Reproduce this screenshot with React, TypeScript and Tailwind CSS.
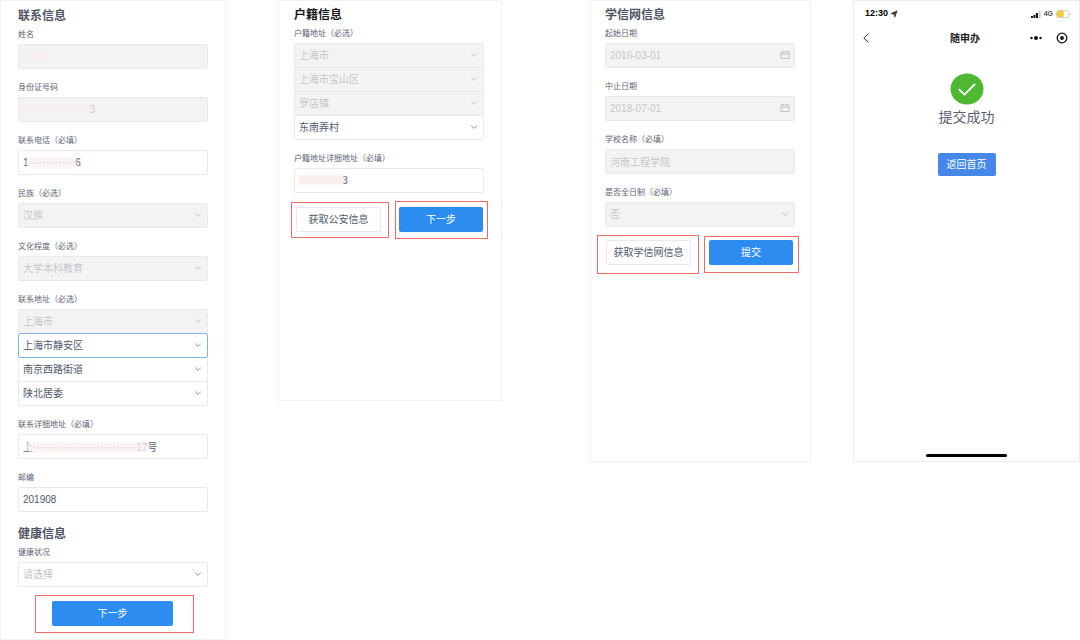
import type { ReactNode } from "react";

const controlBase =
  "block h-[25px] w-full appearance-none rounded-[2px] border bg-white py-0 pr-5 pl-1 text-[10px] leading-[23px] outline-none disabled:bg-[#f3f3f3] disabled:text-[#c6c8cc] disabled:opacity-100";

function Chevron({ muted }: { muted?: boolean }) {
  return (
    <svg
      viewBox="0 0 8 8"
      className={
        muted
          ? "pointer-events-none absolute top-2 right-1.5 size-2 text-[#c3c5c9]"
          : "pointer-events-none absolute top-2 right-1.5 size-2 text-[#8d92a0]"
      }
      fill="none"
      stroke="currentColor"
    >
      <path d="M1.2 2.6 4 5.4 6.8 2.6" />
    </svg>
  );
}

function CalendarIcon() {
  return (
    <svg
      viewBox="0 0 10 10"
      className="pointer-events-none absolute top-[7px] right-[5px] size-2.5 text-[#c0c2c7]"
      fill="none"
      stroke="currentColor"
    >
      <path d="M1 2h8v6.5H1zM1 4.2h8M3 .8v1.7M7 .8v1.7" />
    </svg>
  );
}

function Title({ children, dark }: { children: ReactNode; dark?: boolean }) {
  return (
    <h2
      className={
        dark
          ? "pt-px text-[12px] leading-[18px] font-bold text-[#17181c]"
          : "pt-px text-[12px] leading-[18px] font-bold text-[#4d5362]"
      }
    >
      {children}
    </h2>
  );
}

function Label({ id, children }: { id: string; children: ReactNode }) {
  return (
    <label htmlFor={id} className="block h-5 pt-px text-[8px] leading-5 whitespace-nowrap text-[#5c6475]">
      {children}
    </label>
  );
}

function Picker({
  id,
  value,
  disabled,
  active,
  placeholder,
  label,
}: {
  id: string;
  value: string;
  disabled?: boolean;
  active?: boolean;
  placeholder?: boolean;
  label?: string;
}) {
  return (
    <div className={active ? "relative z-10" : "relative"}>
      <select
        id={id}
        aria-label={label}
        disabled={disabled}
        defaultValue={value}
        className={`${controlBase} ${active ? "border-[#7fb4e6]" : "border-[#e8eaed]"} ${placeholder ? "text-[#bfc1c6]" : "text-[#515a6e]"}`}
      >
        <option>{value}</option>
      </select>
      <Chevron muted={disabled} />
    </div>
  );
}

function TextField({
  id,
  label,
  value,
  disabled,
  date,
  children,
}: {
  id: string;
  label: string;
  value: string;
  disabled?: boolean;
  date?: boolean;
  children?: ReactNode;
}) {
  return (
    <div>
      <Label id={id}>{label}</Label>
      <div className="relative">
        <input
          id={id}
          type="text"
          defaultValue={value}
          disabled={disabled}
          className={`${controlBase} border-[#e8eaed] text-[#515a6e]`}
        />
        {date && <CalendarIcon />}
        {children}
      </div>
    </div>
  );
}

function SelectField({
  id,
  label,
  value,
  disabled,
  placeholder,
}: {
  id: string;
  label: string;
  value: string;
  disabled?: boolean;
  placeholder?: boolean;
}) {
  return (
    <div>
      <Label id={id}>{label}</Label>
      <Picker id={id} value={value} disabled={disabled} placeholder={placeholder} />
    </div>
  );
}

const primary =
  "block h-[25px] w-full rounded-[2px] bg-[#2d8cf0] text-[10px] leading-[25px] whitespace-nowrap text-white";
const secondary =
  "block h-[25px] w-full rounded-[2px] border border-[#e8eaed] bg-white text-[10px] leading-[23px] whitespace-nowrap text-[#515a6e]";

function ContactPanel() {
  return (
    <section className="col-start-1 border border-[#f3f3f3] px-[17px] pt-[5px] pb-1.5">
      <Title>联系信息</Title>
      <div className="-mt-px flex flex-col gap-2">
        <TextField id="name" label="姓名" value="········" disabled>
          <span className="absolute top-2 left-1 h-2 w-7 rounded-full bg-[#f8eeee]/90 blur-[1px]" />
        </TextField>
        <TextField id="id-number" label="身份证号码" value="····················3" disabled>
          <span className="absolute top-2 left-1 h-2 w-[70px] rounded-full bg-[#f6f0f0] blur-[1px]" />
        </TextField>
        <TextField id="phone" label="联系电话（必填）" value="1··············6">
          <span className="absolute top-2 left-2 h-2.5 w-[51px] rounded-full bg-[#f8f0f0]/80 blur-[1px]" />
        </TextField>
        <SelectField id="ethnicity" label="民族（必选）" value="汉族" disabled />
        <SelectField id="education" label="文化程度（必选）" value="大学本科教育" disabled />
        <div>
          <Label id="city">联系地址（必选）</Label>
          <div className="flex flex-col -space-y-px">
            <Picker id="city" value="上海市" disabled />
            <Picker id="district" label="区" value="上海市静安区" active />
            <Picker id="street" label="街道" value="南京西路街道" />
            <Picker id="committee" label="居委" value="陕北居委" />
          </div>
        </div>
        <TextField id="address" label="联系详细地址（必填）" value="上·······························17号">
          <span className="absolute top-2 left-2 h-2.5 w-[124px] rounded-full bg-[#f8f0f0]/80 blur-[1px]" />
        </TextField>
        <TextField id="postcode" label="邮编" value="201908" />
      </div>
      <div className="pt-3">
        <Title>健康信息</Title>
        <div className="-mt-px">
          <SelectField id="health" label="健康状况" value="请选择" placeholder />
        </div>
      </div>
      <div className="mt-2 mr-3.5 ml-[17px] border border-[#ee6b6b] pt-[5px] pr-5 pb-1.5 pl-4">
        <button type="button" className={primary}>
          下一步
        </button>
      </div>
    </section>
  );
}

function HouseholdPanel() {
  return (
    <section className="col-start-3 min-h-[401px] border border-[#f3f3f3] pt-1 pr-[17px] pl-[15px]">
      <Title dark>户籍信息</Title>
      <div className="-mt-px flex flex-col gap-2">
        <div>
          <Label id="reg-city">户籍地址（必选）</Label>
          <div className="flex flex-col -space-y-px">
            <Picker id="reg-city" value="上海市" disabled />
            <Picker id="reg-district" label="区" value="上海市宝山区" disabled />
            <Picker id="reg-town" label="镇" value="罗店镇" disabled />
            <Picker id="reg-village" label="村" value="东南弄村" />
          </div>
        </div>
        <TextField id="reg-address" label="户籍地址详细地址（必填）" value="·············3">
          <span className="absolute top-[7px] left-1 h-2.5 w-[46px] rounded-[3px] bg-[#f8eeee] blur-[1px]" />
        </TextField>
      </div>
      <div className="mt-2 -mr-1 -ml-[3px] grid grid-cols-[98fr_93fr] items-center gap-1.5">
        <div className="border border-[#ee6b6b] pt-1 pr-[7px] pb-[5px] pl-1">
          <button type="button" className={secondary}>
            获取公安信息
          </button>
        </div>
        <div className="border border-[#ee6b6b] pt-[5px] pr-1 pb-1.5 pl-[3px]">
          <button type="button" className={primary}>
            下一步
          </button>
        </div>
      </div>
    </section>
  );
}

function EducationPanel() {
  return (
    <section className="col-start-5 min-h-[462px] border border-[#f3f3f3] pt-1 pr-[15px] pl-3.5">
      <Title>学信网信息</Title>
      <div className="-mt-px flex flex-col gap-2">
        <TextField id="start" label="起始日期" value="2016-03-01" disabled date />
        <TextField id="end" label="中止日期" value="2018-07-01" disabled date />
        <TextField id="school" label="学校名称（必填）" value="河南工程学院" disabled />
        <SelectField id="full-time" label="是否全日制（必填）" value="否" disabled />
      </div>
      <div className="mt-2 -mr-1 -ml-2 grid grid-cols-[102fr_95fr] items-center gap-[5px]">
        <div className="border border-[#ee6b6b] pt-1 pr-[7px] pb-2 pl-2">
          <button type="button" className={secondary}>
            获取学信网信息
          </button>
        </div>
        <div className="border border-[#ee6b6b] pt-[3px] pr-[5px] pb-[7px] pl-1">
          <button type="button" className={primary}>
            提交
          </button>
        </div>
      </div>
    </section>
  );
}

function PhonePanel() {
  return (
    <section className="col-start-7 flex min-h-[462px] flex-col border border-[#ececec]">
      <div className="flex h-[26px] items-center justify-between pr-2 pl-[11px] text-black">
        <div className="flex items-center gap-0.5">
          <span className="text-[9px] font-bold">12:30</span>
          <svg viewBox="0 0 8 8" className="size-2" fill="#444" stroke="#222" strokeWidth=".6">
            <path d="M.8 3.6 7.2.8 4.8 7.2 4 4.2z" />
          </svg>
        </div>
        <div className="flex items-center gap-[3px]">
          <svg viewBox="0 0 10 7" className="h-[7px] w-2.5">
            <path fill="#111" d="M0 5h1.9v2H0zM2.5 3.8h1.9V7H2.500zM5 2h2v5H5z" />
            <path fill="#c8c8c8" d="M7.8 0h1.800v7H7.800z" />
          </svg>
          <span className="text-[7px] font-bold text-[#555]">4G</span>
          <svg viewBox="0 0 15 8" className="h-2 w-[15px]">
            <rect x=".5" y=".5" width="12.5" height="7" rx="2" fill="#fff" stroke="#d3ccb8" />
            <rect x="1" y="1" width="6.7" height="6" rx="1.2" fill="#f8cb3d" />
            <path fill="#aaa" d="M13.8 2.8c1 .2 1 2.2 0 2.4z" />
          </svg>
        </div>
      </div>
      <div className="grid h-[22px] grid-cols-3 items-center pr-[11px] pl-2">
        <button type="button" aria-label="返回" className="justify-self-start">
          <svg viewBox="0 0 8 10" className="h-2.5 w-2" fill="none" stroke="#333">
            <path d="M6.3.8 1.8 5l4.5 4.2" />
          </svg>
        </button>
        <h1 className="text-center text-[10px] font-bold text-[#222]">随申办</h1>
        <div className="flex items-center gap-3.5 justify-self-end">
          <button type="button" aria-label="更多">
            <svg viewBox="0 0 12 6" className="h-1.5 w-3" fill="#111">
              <circle cx="1.5" cy="3" r="1.2" />
              <circle cx="6" cy="3" r="2" />
              <circle cx="10.5" cy="3" r="1.2" />
            </svg>
          </button>
          <button type="button" aria-label="关闭">
            <svg viewBox="0 0 12 12" className="size-3" fill="none" stroke="#111">
              <circle cx="6" cy="6" r="4.8" strokeWidth="1.3" />
              <circle cx="6" cy="6" r="1.9" fill="#111" stroke="none" />
            </svg>
          </button>
        </div>
      </div>
      <div className="flex flex-1 flex-col items-center pt-6">
        <svg viewBox="0 0 34 32" className="h-8 w-[34px]" fill="none">
          <ellipse cx="17" cy="16" rx="16.5" ry="15.5" fill="#4fb832" />
          <path d="M8.800 16.200 14.500 21.600 25 11" stroke="#fff" strokeWidth="1.8" />
        </svg>
        <p className="text-[14px] leading-6 text-[#596070]">提交成功</p>
        <button
          type="button"
          className="mt-6 h-[23px] w-[58px] rounded-[2px] bg-[#4688e8] text-[10px] leading-[23px] text-white"
        >
          返回首页
        </button>
      </div>
      <div className="mb-1 h-[3px] w-[81px] self-center rounded-full bg-black" />
    </section>
  );
}

export default function App() {
  return (
    <main className="grid grid-cols-[226fr_52fr_224fr_88fr_221fr_42fr_227fr] items-start bg-white font-['Liberation_Sans','Noto_Sans_CJK_SC',sans-serif]">
      <ContactPanel />
      <HouseholdPanel />
      <EducationPanel />
      <PhonePanel />
    </main>
  );
}
